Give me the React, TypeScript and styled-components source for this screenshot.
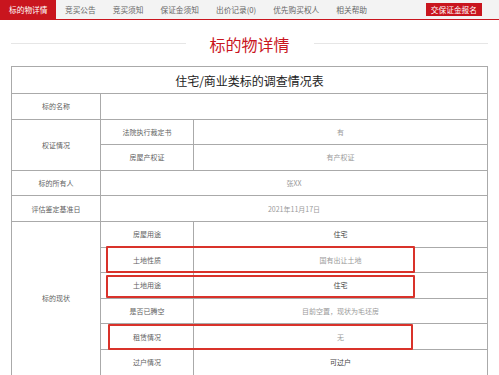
import React from "react";
import styled, { createGlobalStyle } from "styled-components";

const Global = createGlobalStyle`
  body {
    margin: 0;
    background: #fff;
    font-family: "Noto Sans CJK SC", "Noto Sans", sans-serif;
  }
`;

const Page = styled.div`
  width: 499px;
  height: 375px;
  overflow: hidden;
`;

const Nav = styled.div`
  display: flex;
  align-items: center;
  height: 19px;
  background: #f3f3f3;
  border-bottom: 1px solid #c9151e;
  padding-right: 17px;
`;

const Tab = styled.div<{ $active?: boolean }>`
  height: 19px;
  line-height: 19px;
  padding: 0 8.5px;
  font-size: 7.7px;
  white-space: nowrap;
  color: ${(p) => (p.$active ? "#fff" : "#666")};
  background: ${(p) => (p.$active ? "#c9151e" : "transparent")};
  ${(p) => p.$active && "padding: 0 9px;"}
`;

const Spacer = styled.div`
  flex: 1;
`;

const SignUp = styled.div`
  height: 13px;
  line-height: 13px;
  padding: 0 5px;
  font-size: 7.7px;
  color: #fff;
  background: #c9151e;
  white-space: nowrap;
`;

const Heading = styled.div`
  display: flex;
  align-items: center;
  gap: 24px;
  padding: 12px 11px 0;
  height: 35px;
  box-sizing: border-box;
`;

const Rule = styled.div`
  flex: 1;
  height: 1px;
  background: #e6e6e6;
`;

const HeadingText = styled.div`
  font-size: 16px;
  color: #c9151e;
  line-height: 22px;
  white-space: nowrap;
`;

const TableWrap = styled.div`
  position: relative;
  margin: 11px 11px 0;
`;

const Grid = styled.div`
  display: grid;
  grid-template-columns: 89px 93px 1fr;
  grid-template-rows: 27px repeat(11, 25.6px);
  border-top: 1px solid #aaa;
  border-left: 1px solid #aaa;
`;

const Cell = styled.div<{ $span?: number; $rows?: number; $tone?: "label" | "light" | "dark" }>`
  display: flex;
  align-items: center;
  justify-content: center;
  border-right: 1px solid #aaa;
  border-bottom: 1px solid #aaa;
  font-size: 7px;
  white-space: nowrap;
  color: ${(p) => (p.$tone === "light" ? "#9a9a9a" : p.$tone === "dark" ? "#444" : "#5f5f5f")};
  ${(p) => p.$span && `grid-column: span ${p.$span};`}
  ${(p) => p.$rows && `grid-row: span ${p.$rows};`}
`;

const TitleCell = styled(Cell)`
  grid-column: span 3;
  font-size: 12px;
  color: #222;
`;

const Mark = styled.div<{ $l: number; $t: number; $w: number; $h: number }>`
  position: absolute;
  left: ${(p) => p.$l}px;
  top: ${(p) => p.$t}px;
  width: ${(p) => p.$w}px;
  height: ${(p) => p.$h}px;
  border: 2px solid #d9322a;
  border-radius: 1px;
  box-sizing: border-box;
`;

const tabs = ["竞买公告", "竞买须知", "保证金须知", "出价记录(0)", "优先购买权人", "相关帮助"];

const status: [string, string, "light" | "dark"][] = [
  ["房屋用途", "住宅", "dark"],
  ["土地性质", "国有出让土地", "light"],
  ["土地用途", "住宅", "dark"],
  ["是否已腾空", "目前空置，现状为毛坯房", "light"],
  ["租赁情况", "无", "light"],
  ["过户情况", "可过户", "dark"],
];

export default function App() {
  return (
    <Page>
      <Global />
      <Nav>
        <Tab $active>标的物详情</Tab>
        {tabs.map((t) => (
          <Tab key={t}>{t}</Tab>
        ))}
        <Spacer />
        <SignUp>交保证金报名</SignUp>
      </Nav>
      <Heading>
        <Rule />
        <HeadingText>标的物详情</HeadingText>
        <Rule />
      </Heading>
      <TableWrap>
        <Grid>
          <TitleCell>住宅/商业类标的调查情况表</TitleCell>
          <Cell>标的名称</Cell>
          <Cell $span={2} />
          <Cell $rows={2}>权证情况</Cell>
          <Cell>法院执行裁定书</Cell>
          <Cell $tone="light">有</Cell>
          <Cell>房屋产权证</Cell>
          <Cell $tone="light">有产权证</Cell>
          <Cell>标的所有人</Cell>
          <Cell $span={2} $tone="light">张XX</Cell>
          <Cell>评估鉴定基准日</Cell>
          <Cell $span={2} $tone="light">2021年11月17日</Cell>
          <Cell $rows={6}>标的现状</Cell>
          {status.map(([k, v, tone]) => (
            <React.Fragment key={k}>
              <Cell>{k}</Cell>
              <Cell $tone={tone}>{v}</Cell>
            </React.Fragment>
          ))}
        </Grid>
        <Mark $l={95} $t={180} $w={309} $h={27} />
        <Mark $l={95} $t={209} $w={309} $h={23} />
        <Mark $l={97} $t={258} $w={305} $h={26} />
      </TableWrap>
    </Page>
  );
}
